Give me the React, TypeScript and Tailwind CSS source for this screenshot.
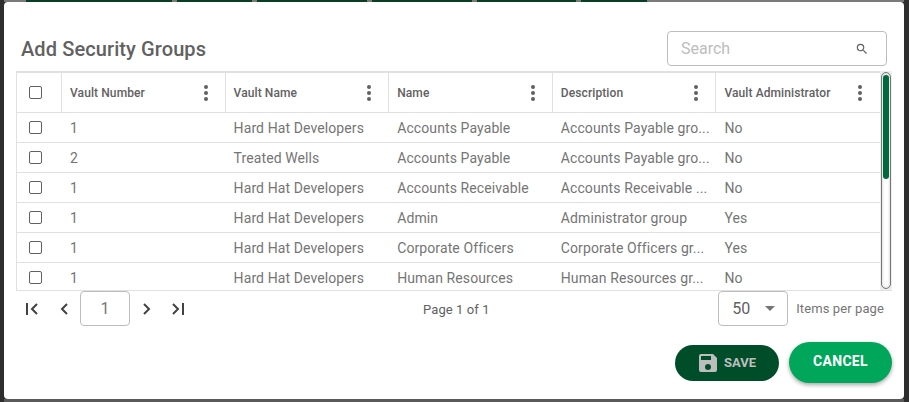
const COLUMNS = ['Vault Number', 'Vault Name', 'Name', 'Description', 'Vault Administrator']

const ROWS = [
  ['1', 'Hard Hat Developers', 'Accounts Payable', 'Accounts Payable gro...', 'No'],
  ['2', 'Treated Wells', 'Accounts Payable', 'Accounts Payable gro...', 'No'],
  ['1', 'Hard Hat Developers', 'Accounts Receivable', 'Accounts Receivable ...', 'No'],
  ['1', 'Hard Hat Developers', 'Admin', 'Administrator group', 'Yes'],
  ['1', 'Hard Hat Developers', 'Corporate Officers', 'Corporate Officers gr...', 'Yes'],
  ['1', 'Hard Hat Developers', 'Human Resources', 'Human Resources gr...', 'No'],
]

// dark green header cells of the page behind the dialog
const BACKDROP_CELLS = ['w-[146px]', 'w-[75px]', 'w-[110px]', 'w-[100px]', 'w-[99px]', 'w-[66px]']

function Checkbox() {
  return <span className="block h-[13px] w-[13px] rounded-[2px] border border-[#616161] bg-white" />
}

function MoreVert() {
  return (
    <svg viewBox="0 0 24 24" className="h-6 w-6 shrink-0 text-[#616161]" fill="currentColor" aria-hidden>
      <circle cx="12" cy="6" r="2" />
      <circle cx="12" cy="12" r="2" />
      <circle cx="12" cy="18" r="2" />
    </svg>
  )
}

function HeaderRow() {
  return (
    <div className="flex h-[42px] border-y border-t-2 border-[#e0e0e0]">
      <div className="flex w-[44px] items-center pl-[12px]">
        <Checkbox />
      </div>
      {COLUMNS.map((label) => (
        <div
          key={label}
          className="flex w-[163.6px] items-center justify-between border-l border-[#e0e0e0] pl-[8px] pr-[7px] text-[12px] font-medium tracking-[0.1px] text-[#616161]"
        >
          <span>{label}</span>
          <MoreVert />
        </div>
      ))}
    </div>
  )
}

function DataRow({ cells }: { cells: string[] }) {
  return (
    <div className="flex h-[30px] shrink-0 border-b border-[#e0e0e0]">
      <div className="flex w-[44px] items-center pl-[12px]">
        <Checkbox />
      </div>
      {cells.map((cell, i) => (
        <div
          key={i}
          className="flex w-[163.6px] items-center whitespace-nowrap pl-[9px] pt-[1px] text-[14px] tracking-[0.1px] text-[#757575]"
        >
          {cell}
        </div>
      ))}
    </div>
  )
}

function PageIcon({ d }: { d: string }) {
  return (
    <svg viewBox="0 0 12 14" className="h-[14px] w-[12px] text-[#424242]" fill="none" stroke="currentColor" strokeWidth="2" aria-hidden>
      <path d={d} />
    </svg>
  )
}

export default function App() {
  return (
    <div className="h-[402px] w-[909px] overflow-hidden bg-[#2e2e2e] font-['Roboto',sans-serif]">
      <div className="ml-[4px] flex h-[2px] w-[900px] bg-[#7a7a7a] pl-[22px]">
        {BACKDROP_CELLS.map((w) => (
          <div key={w} className={`${w} mr-[5px] bg-[#0a3d25]`} />
        ))}
      </div>

      <div className="ml-[4px] h-[397px] w-[900px] rounded-[4px] bg-white px-[12px]">
        <div className="flex h-[69px] items-start justify-between px-[5px]">
          <h1 className="mt-[35px] text-[20px] font-medium leading-[24px] tracking-[0.1px] text-[#616161]">Add Security Groups</h1>
          <div className="mt-[29px] flex h-[35px] w-[220px] items-center justify-between rounded-[4px] border border-[#bdbdbd] pl-[13px] pr-[17px]">
            <span className="text-[16px] text-[#bdbdbd]">Search</span>
            <svg viewBox="0 0 24 24" className="h-[14px] w-[14px] text-[#616161]" fill="currentColor" aria-hidden>
              <path d="M15.5 14h-.79l-.28-.27A6.471 6.471 0 0 0 16 9.5 6.5 6.5 0 1 0 9.5 16c1.61 0 3.09-.59 4.23-1.57l.27.28v.79l5 4.99L20.49 19l-4.99-5zm-6 0C7.01 14 5 11.99 5 9.5S7.01 5 9.5 5 14 7.01 14 9.5 11.99 14 9.5 14z" />
            </svg>
          </div>
        </div>

        <div className="relative h-[220px] w-[876px] overflow-hidden border-b border-l border-[#e0e0e0]">
          <HeaderRow />
          {ROWS.map((row, i) => (
            <DataRow key={i} cells={row} />
          ))}
          <div className="absolute inset-y-0 right-0 w-[12px] bg-[#eeeeee] pl-[1px] pt-[1px]">
            <div className="h-[217px] w-[10px] rounded-[5px] border border-[#757575] bg-white pt-[2px] shadow-[inset_0_0_3px_rgba(0,0,0,0.25)]">
              <div className="mx-auto h-[104px] w-[6px] rounded-[3px] bg-[#00693e]" />
            </div>
          </div>
        </div>

        <div className="flex h-[35px] items-start">
          <div className="flex w-[407px] items-center">
            <div className="flex h-[35px] w-[64px] items-center gap-[21px] pl-[10px]">
              <PageIcon d="M1 1v12M11 2 6 7l5 5" />
              <PageIcon d="M8 2 3 7l5 5" />
            </div>
            <div className="flex h-[35px] w-[50px] items-center justify-center rounded-[4px] border border-[#bdbdbd] text-[16px] text-[#757575]">
              1
            </div>
            <div className="flex h-[35px] items-center gap-[20px] pl-[10px]">
              <PageIcon d="M4 2l5 5-5 5" />
              <PageIcon d="M11 1v12M1 2l5 5-5 5" />
            </div>
          </div>
          <span className="mt-[9px] text-[13px] tracking-[0.1px] text-[#616161]">Page 1 of 1</span>
          <div className="ml-auto flex items-center">
            <div className="flex h-[35px] w-[70px] items-center justify-between rounded-[4px] border border-[#bdbdbd] pl-[13px] pr-[12px] text-[16px] text-[#616161]">
              <span>50</span>
              <span className="h-0 w-0 border-x-[5px] border-t-[5px] border-x-transparent border-t-[#757575]" />
            </div>
            <span className="mx-[8px] text-[13px] tracking-[0.1px] text-[#757575]">Items per page</span>
          </div>
        </div>

        <div className="mt-[16px] flex items-center justify-end gap-[10px]">
          <button className="flex h-[36px] w-[104px] items-center justify-center gap-[4px] rounded-[18px] bg-[#004d2a] pr-[2px] text-[13px] font-bold text-[#bdbdbd]">
            <svg viewBox="0 0 24 24" className="h-[24px] w-[24px]" fill="currentColor" aria-hidden>
              <path d="M17 3H5a2 2 0 0 0-2 2v14a2 2 0 0 0 2 2h14a2 2 0 0 0 2-2V7l-4-4zm-5 16a3 3 0 1 1 0-6 3 3 0 0 1 0 6zm3-10H5V5h10v4z" />
            </svg>
            SAVE
          </button>
          <button className="h-[41px] w-[103px] rounded-[21px] bg-[#00a65a] pb-[3px] text-[14px] font-bold tracking-[0.3px] text-white shadow-[0_2px_4px_rgba(0,0,0,0.35)]">
            CANCEL
          </button>
        </div>
      </div>

      <div className="ml-[4px] h-[3px] w-[900px] bg-[#5a5a5a]" />
    </div>
  )
}
